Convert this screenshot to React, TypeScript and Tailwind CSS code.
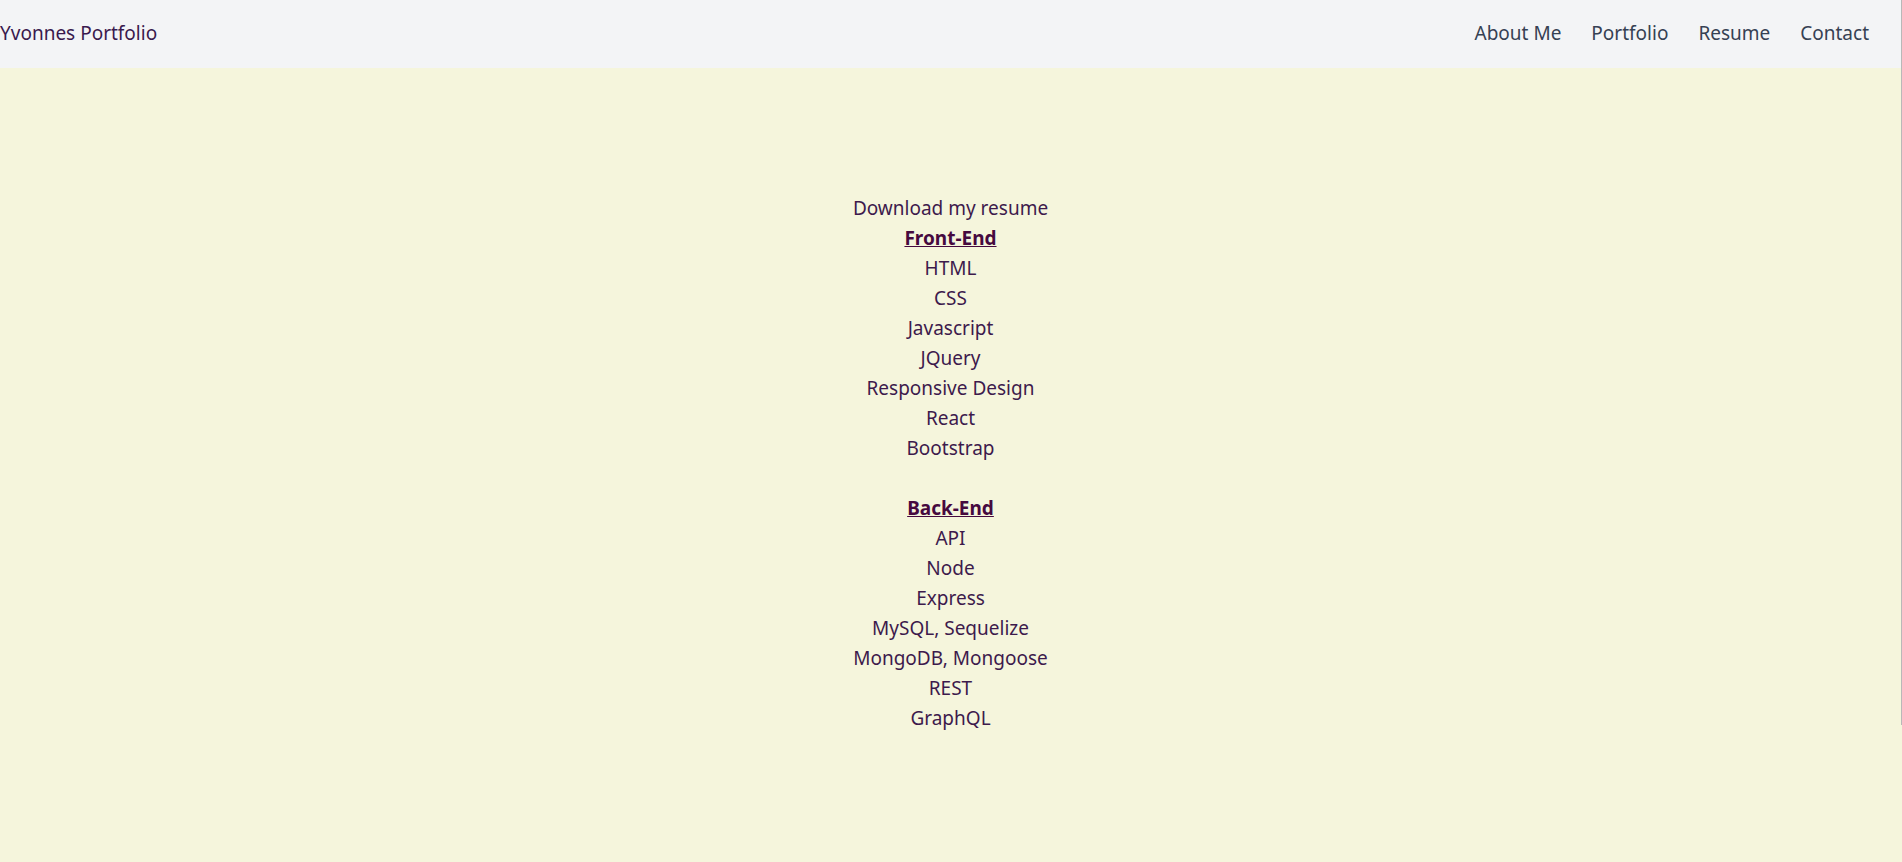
import React from 'react';

const frontEnd = ['HTML', 'CSS', 'Javascript', 'JQuery', 'Responsive Design', 'React', 'Bootstrap'];
const backEnd = ['API', 'Node', 'Express', 'MySQL, Sequelize', 'MongoDB, Mongoose', 'REST', 'GraphQL'];
const links = ['About Me', 'Portfolio', 'Resume', 'Contact'];

function Nav() {
  return (
    <nav className="h-[68px] bg-gray-100 flex items-center justify-between pr-[32px]">
      <a className="text-[19px] leading-[28px] -mt-[2px] text-[#3a1a4e]">Yvonnes Portfolio</a>
      <ul className="flex items-center gap-[30px] -mt-[2px]">
        {links.map(link => (
          <li key={link}>
            <a className="text-[19px] leading-[28px] text-gray-700">{link}</a>
          </li>
        ))}
      </ul>
    </nav>
  );
}

function SkillList({ title, items }: { title: string; items: string[] }) {
  return (
    <div>
      <h3 className="font-bold underline text-[#46093f]">{title}</h3>
      {items.map(item => (
        <p key={item}>{item}</p>
      ))}
    </div>
  );
}

export default function App() {
  return (
    <div className="min-h-[862px] bg-[#f5f5dc] font-['Noto_Sans','Open_Sans',sans-serif]">
      <div className="border-r border-[#b8b8b8] h-[725px] bg-[#f5f5dc]">
        <Nav />
        <main className="pt-[125px] flex flex-col items-center text-center text-[19px] leading-[30px] text-[#3d1a4c]">
          <a>Download my resume</a>
          <SkillList title="Front-End" items={frontEnd} />
          <div className="h-[30px]" />
          <SkillList title="Back-End" items={backEnd} />
        </main>
      </div>
    </div>
  );
}
